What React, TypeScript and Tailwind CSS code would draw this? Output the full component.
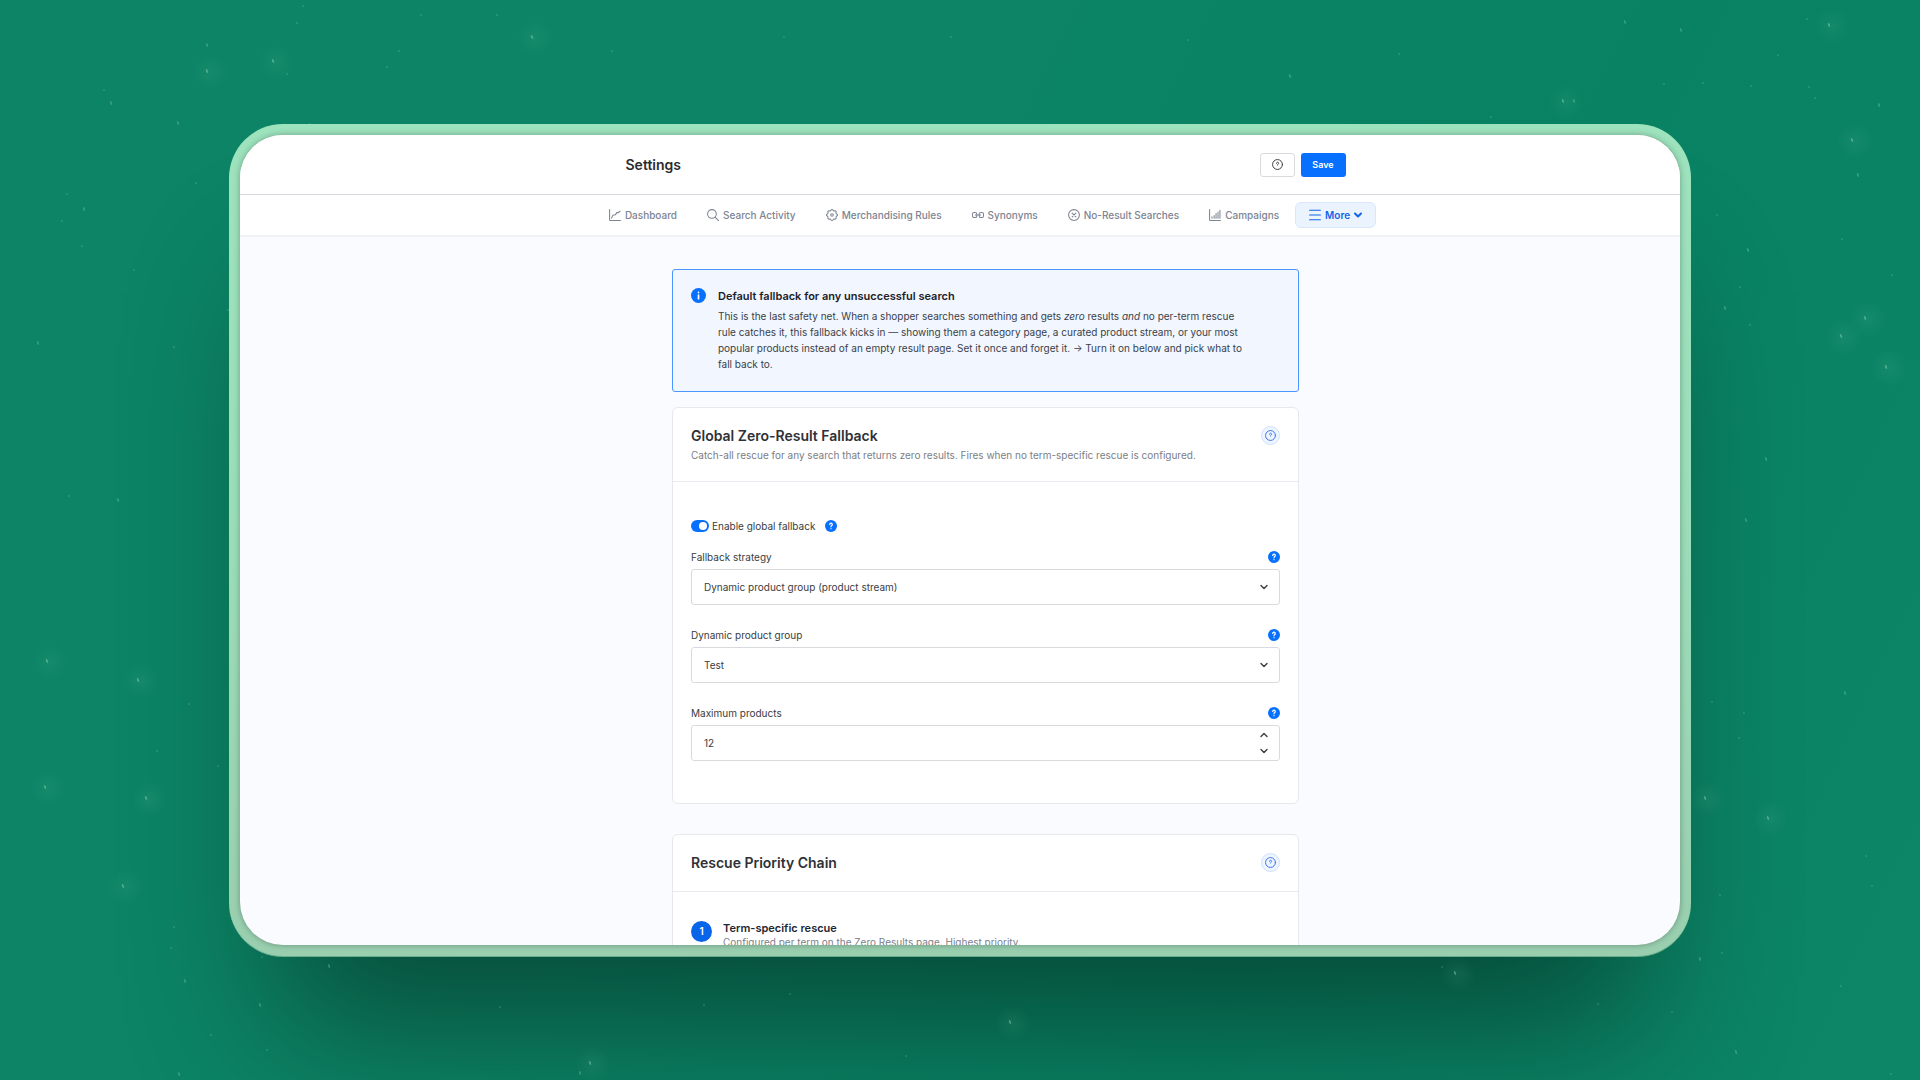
import type { ReactNode } from "react";
import { useState } from "react";

/* x, y, size (1 = faint, 2 = medium, 3 = glowing) */
const stars: [number, number, number][] = [
  [207, 45, 2], [207, 71, 3], [273, 61, 3], [532, 37, 3], [287, 74, 1], [111, 103, 2], [178, 123, 2], [399, 51, 1],
  [387, 67, 1], [612, 51, 1], [421, 15, 1], [497, 15, 1], [297, 23, 1], [303, 6, 1], [104, 90, 1], [67, 194, 1],
  [84, 209, 2], [62, 221, 1], [196, 183, 1], [82, 246, 1], [134, 270, 1], [38, 343, 2], [174, 347, 1], [228, 310, 1],
  [310, 125, 2], [1625, 22, 2], [1681, 30, 2], [1807, 19, 1], [1829, 25, 3], [1778, 55, 1], [1399, 54, 1], [1290, 76, 2],
  [1563, 101, 3], [1574, 101, 2], [1664, 84, 1], [1703, 83, 1], [1751, 86, 1], [1809, 87, 1], [1879, 105, 2],
  [1491, 117, 1], [1852, 140, 3], [1858, 175, 2], [1717, 215, 1], [1842, 239, 1], [1748, 250, 2], [1740, 287, 1],
  [1725, 308, 2], [1865, 318, 3], [1841, 336, 3], [1750, 325, 1], [1892, 275, 1], [1705, 798, 3], [1768, 818, 3],
  [1712, 702, 1], [1744, 713, 1], [1739, 738, 1], [1866, 856, 1], [1720, 895, 1], [1700, 959, 2], [1722, 953, 1],
  [1455, 973, 3], [1442, 967, 1], [1598, 1004, 1], [1672, 1012, 1], [1736, 1052, 2], [1841, 986, 1], [1872, 886, 1],
  [1891, 1074, 1], [189, 704, 1], [45, 787, 3], [146, 798, 3], [123, 886, 3], [218, 766, 1], [174, 927, 1],
  [171, 948, 1], [185, 981, 2], [329, 966, 2], [262, 957, 1], [260, 1005, 2], [211, 1035, 1], [179, 1074, 2],
  [267, 1050, 1], [500, 1007, 1], [590, 1063, 3], [580, 1073, 2], [704, 1005, 1], [157, 751, 1], [47, 661, 3],
  [138, 680, 3], [118, 500, 2], [1766, 459, 2], [1886, 367, 3], [1746, 520, 2], [1845, 693, 2], [69, 496, 1],
  [1010, 1022, 3], [906, 1056, 1], [790, 994, 1], [1815, 98, 1], [1188, 40, 1], [951, 37, 1], [784, 37, 1],
];

function Stars() {
  return (
    <svg
      aria-hidden="true"
      className="pointer-events-none absolute inset-0 h-full w-full"
      viewBox="0 0 1920 1080"
      preserveAspectRatio="xMidYMid slice"
    >
      <defs>
        <radialGradient id="glow">
          <stop offset="0" stopColor="#7fd0a8" stopOpacity="0.09" />
          <stop offset="1" stopColor="#7fd0a8" stopOpacity="0" />
        </radialGradient>
      </defs>
      {stars.map(([x, y, s]) => (
        <g key={`${x}-${y}`}>
          {s === 3 && <circle cx={x + 3} cy={y + 1} r="18" fill="url(#glow)" />}
          <ellipse
            cx={x}
            cy={y}
            rx="1"
            ry={s === 1 ? 1 : 2}
            transform={`rotate(-20 ${x} ${y})`}
            fill="#9fdcc0"
            opacity={s === 1 ? 0.22 : s === 2 ? 0.3 : 0.42}
          />
        </g>
      ))}
    </svg>
  );
}

function Line({ children, className = "size-3" }: { children: ReactNode; className?: string }) {
  return (
    <svg
      aria-hidden="true"
      viewBox="0 0 16 16"
      className={`${className} shrink-0`}
      fill="none"
      stroke="currentColor"
      strokeWidth="1.4"
      strokeLinecap="round"
      strokeLinejoin="round"
    >
      {children}
    </svg>
  );
}

/* Cog outline: a circle whose radius rises and falls eight times. */
const cogOutline =
  Array.from({ length: 96 }, (_, i) => {
    const a = (i / 96) * Math.PI * 2;
    const r = 6.6 + 0.75 * Math.cos(8 * a);
    return `${i ? "L" : "M"}${(8 + r * Math.sin(a)).toFixed(2)} ${(8 - r * Math.cos(a)).toFixed(2)}`;
  }).join("") + "Z";

const DashboardIcon = () => (
  <Line>
    <path d="M.8.8v13.4q0 1 1 1h13.4M3.4 12.2l1.8-3.8 3.2-.6 2-3 2 .2 2.4-2.2" />
  </Line>
);
const SearchIcon = () => (
  <Line>
    <circle cx="6.6" cy="6.6" r="5.8" />
    <path d="m10.8 10.8 4.6 4.6" />
  </Line>
);
const GearIcon = () => (
  <Line>
    <path d={cogOutline} />
    <circle cx="8" cy="8" r="1.7" />
  </Line>
);
const LinkIcon = () => (
  <Line>
    <path d="M6.4 8.8v.4a2.2 2.2 0 0 1-2.2 2.2H3A2.4 2.4 0 0 1 .6 9V7A2.4 2.4 0 0 1 3 4.6h1.2a2.2 2.2 0 0 1 2.2 2.2M9.6 8.8v.4a2.2 2.2 0 0 0 2.2 2.2H13A2.4 2.4 0 0 0 15.4 9V7A2.4 2.4 0 0 0 13 4.6h-1.2a2.2 2.2 0 0 0-2.2 2.2M4.4 8h7.2" />
  </Line>
);
const CrossCircleIcon = () => (
  <Line>
    <circle cx="8" cy="8" r="7.2" />
    <path d="m5.5 5.5 5 5m0-5-5 5" />
  </Line>
);
const ChartIcon = () => (
  <Line>
    <path d="M.8.8v13.4q0 1 1 1h13.4" />
    <path d="M4 12.4v-2M6.8 12.4V8.6M9.4 12.4V6M12 12.4V4M14.6 12.4V1.6" />
  </Line>
);
const MenuIcon = () => (
  <Line>
    <path d="M.8 1.6h14.4M.8 8h14.4M.8 14.4h14.4" />
  </Line>
);
const HelpIcon = ({ className }: { className?: string }) => (
  <Line className={className}>
    <circle cx="8" cy="8" r="7.2" />
    <path d="M6.6 6.2A1.5 1.5 0 1 1 8.8 7.5Q8 8 8 8.8" />
  </Line>
);
const Chevron = ({ up = false, bold = false }: { up?: boolean; bold?: boolean }) => (
  <svg
    aria-hidden="true"
    viewBox="0 0 8 8"
    className="size-2 shrink-0"
    fill="none"
    stroke="currentColor"
    strokeWidth={bold ? 2 : 1.4}
    strokeLinecap="round"
    strokeLinejoin="round"
  >
    <path d={up ? "m1 5.5 3-3 3 3" : "m1 2.5 3 3 3-3"} />
  </svg>
);

function HelpDot({ topic }: { topic: string }) {
  return (
    <button
      type="button"
      aria-label={`Help: ${topic}`}
      className="flex size-3 shrink-0 items-center justify-center rounded-full bg-[#0870ff] text-white"
    >
      <svg
        aria-hidden="true"
        viewBox="0 0 12 12"
        className="size-3"
        fill="none"
        stroke="currentColor"
        strokeWidth="1.2"
        strokeLinecap="round"
      >
        <path d="M4.7 4.5a1.3 1.3 0 1 1 2 1.1Q6 6.1 6 6.8" />
        <path d="M6 8.6v.1" />
      </svg>
    </button>
  );
}

function CardHead({ title, text }: { title: string; text?: string }) {
  return (
    <div className="flex items-start justify-between border-b border-[#e9ebf0] p-[18px]">
      <div>
        <h2 className="text-sm font-semibold leading-5 text-[#2f3136]">{title}</h2>
        {text && <p className="mt-px text-[10px] leading-4 text-[#7b7e85]">{text}</p>}
      </div>
      <button
        type="button"
        aria-label={`About ${title}`}
        className="flex size-[19px] shrink-0 items-center justify-center rounded-full border border-[#cfe2ff] bg-[#eff5ff] text-[#3672ee]"
      >
        <HelpIcon className="size-[11px]" />
      </button>
    </div>
  );
}

function FieldLabel({ id, label }: { id: string; label: string }) {
  return (
    <div className="mb-1 flex h-4 items-center justify-between">
      <label htmlFor={id} className="text-[10px] leading-4">
        {label}
      </label>
      <HelpDot topic={label} />
    </div>
  );
}

function SelectField({ id, label, options }: { id: string; label: string; options: string[] }) {
  return (
    <div>
      <FieldLabel id={id} label={label} />
      <div className="relative">
        <select
          id={id}
          className="h-9 w-full appearance-none rounded-[3px] border border-[#d8dade] bg-white px-3 text-[10px] text-[#3a3c41]"
        >
          {options.map((o) => (
            <option key={o}>{o}</option>
          ))}
        </select>
        <span className="pointer-events-none absolute inset-y-0 right-3 flex items-center">
          <Chevron />
        </span>
      </div>
    </div>
  );
}

const tabs: { label: string; icon: ReactNode }[] = [
  { label: "Dashboard", icon: <DashboardIcon /> },
  { label: "Search Activity", icon: <SearchIcon /> },
  { label: "Merchandising Rules", icon: <GearIcon /> },
  { label: "Synonyms", icon: <LinkIcon /> },
  { label: "No-Result Searches", icon: <CrossCircleIcon /> },
  { label: "Campaigns", icon: <ChartIcon /> },
];

export default function App() {
  const [max, setMax] = useState(12);
  return (
    <div className="relative flex h-screen overflow-hidden bg-[linear-gradient(115deg,#0c8465_0%,#0c8465_40%,#088262_70%,#0d8567_100%)] px-[229px] pt-[124px] pb-[123px] font-['Inter',sans-serif] text-[#3a3c41]">
      <div className="flex min-w-0 flex-1 rounded-[54px] border-b border-[#6bac8b] bg-linear-to-b from-[#9de3bd] via-[#9bddb9] to-[#99cfaf] p-[11px] shadow-[0_118px_150px_-50px_rgba(0,0,0,0.43)]">
        <div className="flex min-w-0 flex-1 flex-col overflow-hidden rounded-[43px] bg-[#fafbff] shadow-[0_0_6px_rgba(0,0,0,0.3)]">
          <header className="shrink-0 border-b border-[#d6d9df] bg-white pl-[51px]">
            <div className="mx-auto flex h-[59px] max-w-[720px] items-center justify-between">
              <h1 className="text-sm font-semibold leading-5 text-[#2a2c30]">Settings</h1>
              <div className="flex gap-1.5">
                <button
                  type="button"
                  aria-label="Help"
                  className="flex h-6 w-[35px] items-center justify-center rounded-[3px] border border-[#d8dade] bg-white text-[#3a3c40]"
                >
                  <HelpIcon className="size-[11px]" />
                </button>
                <button type="button" className="h-6 w-[45px] rounded-[3px] bg-[#0870ff] text-[9px] font-semibold text-white">
                  Save
                </button>
              </div>
            </div>
          </header>
          <nav className="flex shrink-0 justify-center gap-0.5 border-b-2 border-[#f0f1f5] bg-white py-[7px] pl-[51px] text-[10px] font-medium leading-4 text-[#7d8492]">
            {tabs.map((t) => (
              <a key={t.label} href="#" className="flex h-[26px] items-center gap-1 px-3.5 whitespace-nowrap">
                {t.icon}
                {t.label}
              </a>
            ))}
            <button
              type="button"
              className="flex h-[26px] items-center gap-1 rounded-md border border-[#d9e7fd] bg-[#ebf3ff] px-[13px] font-semibold text-[#1263e6]"
            >
              <MenuIcon />
              More
              <Chevron bold />
            </button>
          </nav>
          <main className="min-h-0 flex-1 overflow-hidden pt-8 pl-[51px]">
            <div className="mx-auto max-w-[627px]">
              <section className="mb-[15px] flex items-start gap-3 rounded-[3px] border border-[#4b95ff] bg-[#f1f6ff] px-[18px] pt-[18px] pb-[19px]">
                <svg aria-hidden="true" viewBox="0 0 16 16" className="size-[15px] shrink-0">
                  <circle cx="8" cy="8" r="8" fill="#0870ff" />
                  <path d="M8 7.6v3.8M8 4.7v.1" stroke="#fff" strokeWidth="1.8" strokeLinecap="round" />
                </svg>
                <div className="max-w-[532px]">
                  <h2 className="text-[11px] font-semibold leading-4 text-[#1d2129]">
                    Default fallback for any unsuccessful search
                  </h2>
                  <p className="mt-1 text-[10px] leading-4 text-[#3a3f4a]">
                    This is the last safety net. When a shopper searches something and gets <em>zero</em> results{" "}
                    <em>and</em> no per-term rescue rule catches it, this fallback kicks in — showing them a category
                    page, a curated product stream, or your most popular products instead of an empty result page. Set
                    it once and forget it. → Turn it on below and pick what to fall back to.
                  </p>
                </div>
              </section>

              <section className="mb-[30px] rounded-md border border-[#e6e8ee] bg-white">
                <CardHead
                  title="Global Zero-Result Fallback"
                  text="Catch-all rescue for any search that returns zero results. Fires when no term-specific rescue is configured."
                />
                <div className="px-[18px] pt-9 pb-[42px]">
                  <div className="mb-[15px] flex h-4 items-center">
                    <label className="flex items-center gap-[3px] text-[10px] leading-4">
                      <input
                        type="checkbox"
                        role="switch"
                        defaultChecked
                        className="h-3 w-[18px] appearance-none rounded-full bg-[#a3adb8] p-[2px] before:block before:size-2 before:rounded-full before:bg-white checked:bg-[#0870ff] checked:before:ml-1.5"
                      />
                      Enable global fallback
                    </label>
                    <span className="ml-2.5 flex">
                      <HelpDot topic="Enable global fallback" />
                    </span>
                  </div>
                  <div className="flex flex-col gap-[22px]">
                    <SelectField
                      id="strategy"
                      label="Fallback strategy"
                      options={["Dynamic product group (product stream)", "Category page", "Popular products"]}
                    />
                    <SelectField id="group" label="Dynamic product group" options={["Test"]} />
                    <div>
                      <FieldLabel id="max" label="Maximum products" />
                      <div className="relative">
                        <input
                          id="max"
                          type="text"
                          inputMode="numeric"
                          value={max}
                          onChange={(e) => setMax(Number(e.target.value) || 0)}
                          className="h-9 w-full rounded-[3px] border border-[#d8dade] bg-white px-3 text-[10px] text-[#3a3c41]"
                        />
                        <div className="absolute inset-y-1.5 right-3 flex flex-col justify-between">
                          <button type="button" aria-label="Increase" onClick={() => setMax(max + 1)}>
                            <Chevron up />
                          </button>
                          <button type="button" aria-label="Decrease" onClick={() => setMax(max - 1)}>
                            <Chevron />
                          </button>
                        </div>
                      </div>
                    </div>
                  </div>
                </div>
              </section>

              <section className="rounded-md border border-[#e6e8ee] bg-white">
                <CardHead title="Rescue Priority Chain" />
                <ol className="px-[18px] pt-[29px] pb-8">
                  <li className="flex gap-[11px]">
                    <span className="flex size-[21px] shrink-0 items-center justify-center rounded-full bg-[#0864e8] text-[10px] font-semibold text-white">
                      1
                    </span>
                    <div>
                      <h3 className="text-[11px] font-semibold leading-[14px] text-[#1f2633]">Term-specific rescue</h3>
                      <p className="text-[10px] leading-[15px] text-[#7b808c]">
                        Configured per term on the Zero Results page. Highest priority.
                      </p>
                    </div>
                  </li>
                </ol>
              </section>
            </div>
          </main>
        </div>
      </div>
      <Stars />
    </div>
  );
}
